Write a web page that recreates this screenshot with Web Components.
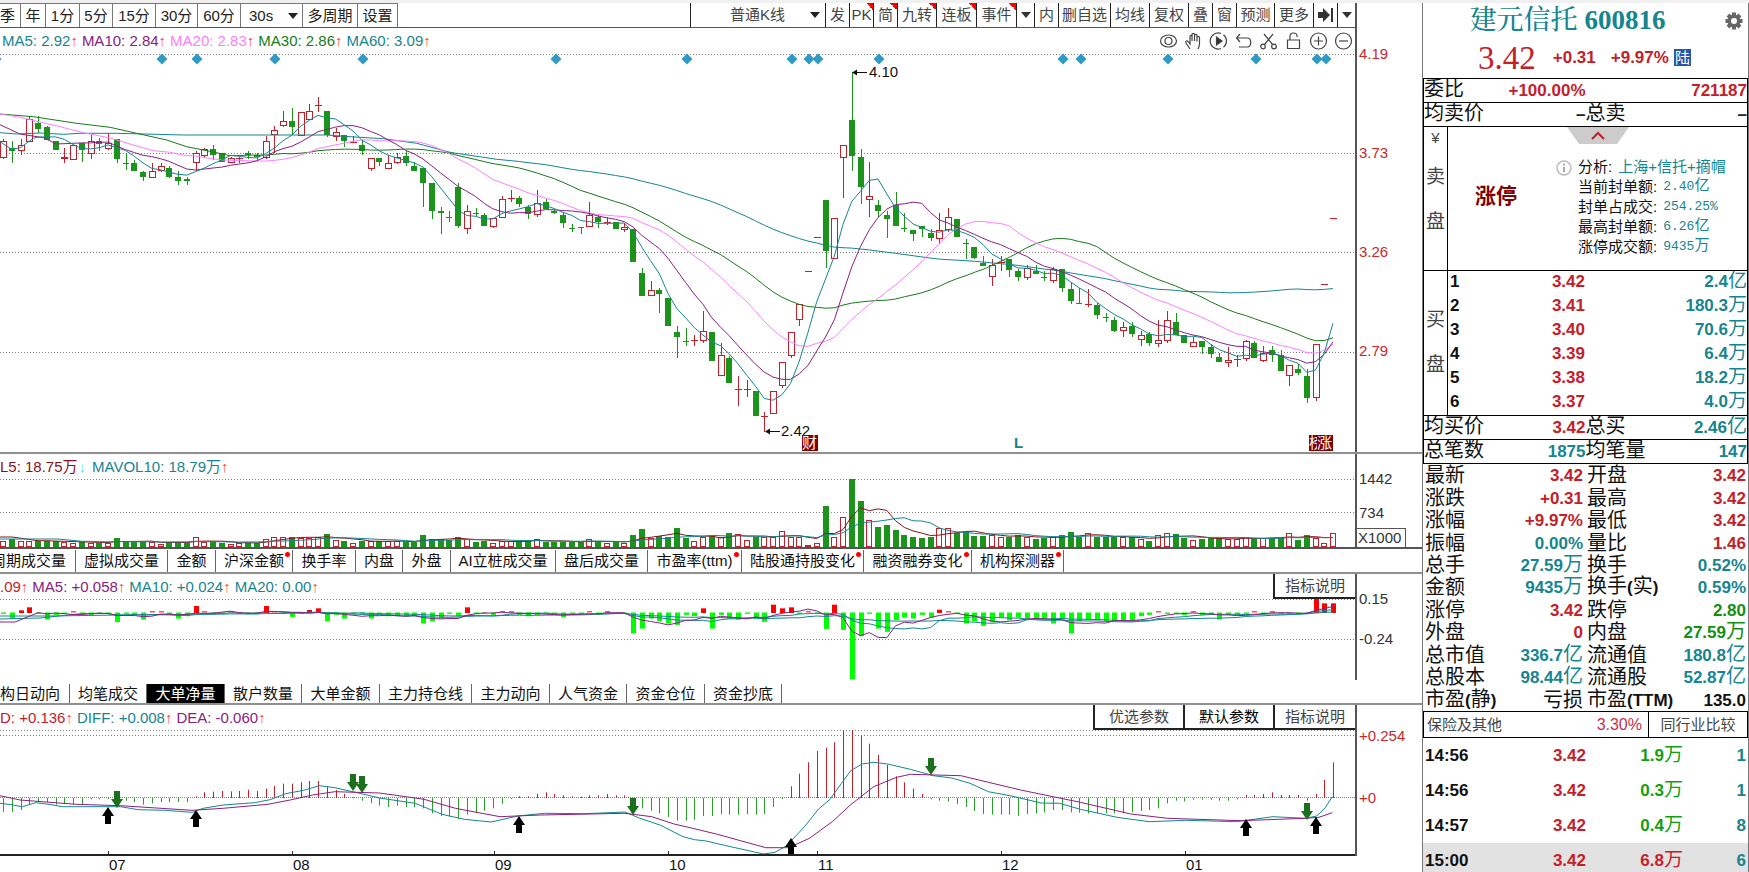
<!DOCTYPE html>
<html lang="zh-CN">
<head>
<meta charset="utf-8">
<title>建元信托 600816</title>
<style>
html,body{margin:0;height:100%}
body{font:15px/20px "Liberation Sans","Noto Sans CJK SC",sans-serif;color:#111;background:#fff;overflow:hidden}
</style>
</head>
<body>
<stock-app></stock-app>
<script>
const FONT = '"Liberation Sans","Noto Sans CJK SC",sans-serif';
const BASE = `*{box-sizing:border-box}button,select{font:15px/20px ${FONT};color:inherit;background:none;border:0;padding:0;margin:0;white-space:nowrap;border-radius:0}`;
class Base extends HTMLElement {
  connectedCallback() {
    if (this.shadowRoot) return;
    this.attachShadow({mode: 'open'}).innerHTML = `<style>${BASE}${this.css()}</style>${this.html()}`;
  }
  css() { return ''; }
  html() { return '<slot></slot>'; }
}
const X = i => Math.round(3 + 8.75 * i);
const RED = '#c4202a', GREEN = '#1c941c', TEAL = '#158590', PURPLE = '#8a2080', PINK = '#ff80ff', DKGREEN = '#1a7a1a', MAROON = '#8b1018';

/* Daily candles: colour, high, body top, body bottom, low (thirds of a pixel from the page top) */
const K = `r418,424,470,478 g424,443,452,488 r418,436,451,465 r347,358,424,424 g347,370,387,398 g378,382,421,421 g424,424,451,451 r443,472,476,488 r436,436,478,478 g430,430,451,486
r404,424,458,478 g415,424,432,452 r400,430,443,451 g417,417,478,488 g460,490,493,510 g480,490,512,512 g513,517,530,542 r490,513,530,535 r490,499,511,515 g497,505,530,535
g513,532,542,556 g532,538,543,556 r453,460,487,512 r445,447,466,475 g435,447,464,480 g460,460,486,486 r470,474,486,490 r470,474,478,490 g453,460,464,478 g460,464,470,480
r407,424,470,478 r378,390,402,458 r333,364,376,380 g325,364,380,405 r337,337,404,404 r313,334,357,360 r292,314,317,335 g333,333,404,412 r385,396,407,424 g405,405,424,440
r408,427,430,430 g420,434,452,466 r473,473,503,512 g473,473,486,497 r466,488,503,503 r458,470,487,492 g453,468,488,497 g487,497,512,512 g503,503,549,620 g550,550,632,658
g622,632,638,703 g632,650,653,665 g550,562,677,684 r614,633,683,703 g625,640,643,648 g640,645,677,677 r653,653,677,684 r588,597,650,650 r570,594,597,605 g588,595,612,620
g615,622,643,658 r570,608,642,650 g598,606,628,628 g628,632,638,642 g637,645,669,685 g672,685,688,695 g680,680,684,703 r607,645,677,677 g645,650,665,684 r652,667,670,676
g667,667,688,688 r668,680,688,695 g687,687,785,785 g805,820,887,887 r843,871,886,886 g865,870,882,940 g895,895,977,977 g978,997,1010,1074 g985,1023,1026,1038 r1005,1019,1022,1037
r932,994,1021,1029 g997,997,1082,1082 r1030,1065,1126,1126 g1068,1075,1149,1149 r1128,1167,1171,1217 r1140,1167,1171,1190 g1174,1174,1247,1247 r1236,1248,1251,1295 r1174,1174,1238,1238 r1087,1087,1156,1163
r997,997,1066,1074 r912,912,958,977 r814,814,814,814 r712,712,712,712 g600,600,752,805 r653,653,773,777 r435,435,470,595 g217,360,467,512 g446,472,562,613 r487,589,598,650
g600,615,632,652 g634,645,658,715 g577,616,677,677 g640,685,688,697 g690,690,703,722 g678,678,688,710 g687,699,713,723 r640,691,713,732 r625,652,688,696 g658,658,712,712
g716,730,733,776 g742,742,773,778 g767,790,797,797 r777,795,829,857 r768,785,789,812 g777,777,811,832 g807,814,830,842 r795,804,830,840 g795,814,823,823 g813,832,835,842
r800,806,841,850 g806,806,863,875 g850,868,902,912 g865,910,913,913 r868,911,914,922 g908,915,946,958 g940,952,955,966 g952,959,992,996 r966,980,991,1010 g966,978,1001,1010
r992,1006,1017,1037 g996,1003,1029,1037 r960,1021,1030,1041 r933,961,1021,1029 g940,967,1006,1006 g1004,1004,1030,1030 r1010,1025,1037,1041 g1023,1023,1041,1063 g1033,1041,1063,1074 g1060,1070,1086,1086
r1041,1079,1086,1102 r1066,1076,1080,1102 r1019,1024,1074,1082 g1023,1030,1074,1074 r1038,1058,1081,1086 g1038,1050,1065,1086 g1050,1064,1112,1112 r1096,1096,1126,1157 g1092,1106,1118,1126 g1107,1128,1194,1208
r1032,1032,1190,1202 r852,852,852,852 r653,653,653,653`.split(/\s+/).map(s => [s[0], ...s.slice(1).split(',').map(n => n / 3)]);
const CLOSE = K.map(k => k[0] === 'r' ? k[2] : k[3]);

/* Volume bar tops */
const V = `304 298 303 303 303 303 304 306 308 306 308 308 308 293 306 306 306 306 312 306 306 308 290 306 306 308 312 308 308 308
297 290 290 290 295 295 290 282 300 304 308 302 302 304 304 304 306 306 285 297 297 300 292 297 306 303 308 303 304 304 300 297 305 306
306 306 306 297 306 308 306 310 285 266 293 288 290 263 295 303 292 288 292 278 282 300 290 290 292 274 290 290 314 310 198 290 232 116 183 240
262 255 270 284 292 295 292 263 263 278 276 288 288 285 292 290 284 290 298 295 292 285 277 290 280 290 292 292 292 292 296 302 286 278 282 293
300 298 295 293 298 298 290 295 293 293 295 278 300 285 293 308 278`.split(/\s+/).map(n => 440 + n / 3);

/* Net large orders: end of each bar, zero at 517 */
const N = `521 535 511 502 521 538 524 521 514 521 524 521 521 546 521 524 538 514 514 524 535 528 498 514 521 521 514 521 521 521
498 514 521 530 521 510 505 543 524 535 521 521 535 524 528 528 528 528 550 543 535 521 528 502 521 521 524 514 514 524 528 524 521 521
531 521 521 514 521 514 521 521 580 565 535 543 550 554 524 528 505 565 524 535 538 521 535 545 494 505 502 521 514 521 566 494 569 717 588 521
565 575 540 532 535 524 532 509 514 521 550 543 557 546 532 540 532 535 538 535 550 538 580 543 540 540 543 543 543 540 528 524 514 521 521 524
514 524 524 538 524 524 521 514 521 514 521 521 521 521 474 490 490`.split(/\s+/).map(n => 440 + n / 3);

/* MACD histogram: end of each bar, zero at 354 */
const M = `396 396 390 374 366 366 374 372 374 372 358 358 357 372 362 366 374 370 366 366 366 366 349 337 335 333 334 333 329 333
326 318 311 311 307 303 303 320 330 342 352 362 370 377 381 377 381 381 385 400 408 410 416 404 400 392 385 371 357 349 349 341 337 342 346 349 350 346 346 342
346 346 365 385 392 400 411 422 422 419 408 408 402 404 404 402 404 402 381 357 319 281 247 213 203 187 153 150 165 191
225 255 289 307 326 342 358 362 365 372 381 393 402 404 404 404 407 402 400 397 390 390 397 398 400 400 400 400 400 397 393 390 385 370 362 364 359 359 359 362
362 358 345 345 342 337 345 345 345 362 342 300 247`.split(/\s+/).map(n => 680 + n / 3);

const pl = (pts, c) => `<polyline points="${pts.map(p => p[0].toFixed(1) + ',' + p[1].toFixed(1)).join(' ')}" fill="none" stroke="${c}"/>`;
const scale = (s, ox, kx, oy) => s.split(' ').map(p => { const [a, b] = p.split(','); return [ox + a / kx, oy + b / 3]; });
const avg = (d, n, c, lead = []) => {
  const pts = [...lead];
  for (let i = n - 1; i < d.length; i++) {
    let t = 0;
    for (let j = 0; j < n; j++) t += d[i - j];
    pts.push([3 + 8.75 * i, t / n]);
  }
  return pl(pts, c);
};
const dots = (y, d = '1 2') => `<path d="M0 ${y + .5}H1355" stroke="#808080" stroke-dasharray="${d}"/>`;
const box = (x, y, w, h, c) => `<rect x="${x}" y="${y}" width="${w}" height="${Math.max(1, h)}" fill="${c}"/>`;
const hollow = (x, y, w, h, c) => `<rect x="${x + .5}" y="${y + .5}" width="${w - 1}" height="${Math.max(1, h - 1)}" fill="#fff" stroke="${c}"/>`;

function priceArt() {
  let s = [54, 153, 252, 352].map(y => dots(y)).join('');
  for (const x of [-4, 162, 197, 275, 363, 556, 687, 792, 809, 818, 879, 1063, 1081, 1168, 1256, 1317, 1326])
    s += `<path d="M${x - 5.5} 59L${x} 53.5L${x + 5.5} 59L${x} 64.500z" fill="#2e9bc6"/>`;
  K.forEach(([c, h, t, b, l], i) => {
    const x = X(i), col = c === 'r' ? RED : GREEN, ty = Math.round(t), by = Math.round(b);
    if (l - h > .5) s += box(x, Math.round(h), 1, Math.round(l) - Math.round(h), col);
    if (c === 'r' && b - t > 1.8) s += hollow(x - 3, ty, 7, by - ty + 1, col);
    else s += box(x - 3, ty, c === 'r' ? 7 : 6, by - ty, col);
  });
  s += avg(CLOSE, 60, TEAL, scale('0,398 50,402 120,399 190,403 240,400 350,400 550,405 980,405 1050,410 1150,416 1250,430 1350,457 1490,478 1620,493', 0, 3, 0).filter(p => p[0] < 518));
  s += avg(CLOSE, 30, DKGREEN, scale('0,342 100,350 230,370 330,382 410,400 500,420 560,440 640,456 690,467', 0, 3, 0));
  s += avg(CLOSE, 20, PINK, scale('0,342 60,352 120,366 180,380 250,398 330,414 390,432 460,452', 0, 3, 0));
  s += avg(CLOSE, 10, PURPLE, scale('0,374 60,402 130,413 170,432', 0, 3, 0));
  s += avg(CLOSE, 5, TEAL, scale('0,425 35,448 61,443 100,415', 0, 3, 0));
  s += `<path d="M854 72.500H867M767 431.500H780" stroke="#111"/><path d="M852 72.500l5-3v6zM765 431.500l5-3v6z" fill="#111"/>`;
  return s;
}
function volumeArt() {
  let s = dots(479) + dots(512);
  V.forEach((t, i) => { const y = Math.round(t); s += K[i][0] === 'r' ? hollow(X(i) - 3, y, 6, 547 - y, RED) : box(X(i) - 3, y, 6, 547 - y, GREEN); });
  return s + avg(V, 5, MAROON, [[0, 537], [12, 537]]) + avg(V, 10, TEAL, [[0, 539], [58, 539]]);
}
function netArt() {
  let s = [599, 639, 680].map(y => dots(y)).join('');
  N.forEach((y, i) => {
    const up = y < 612.3;
    s += up ? box(X(i) - 2, y, 5, 613 - y - (y > 611 ? 1 : 0), '#f00') : box(X(i) - 2, 612.5, 5, y - 612.3, '#0f0');
  });
  return s + avg(N, 20, TEAL, [[0, 616], [50, 616]]) + avg(N, 10, TEAL, [[0, 619], [40, 618]]) + avg(N, 5, PURPLE, [[0, 622], [15, 622]]);
}
function macdArt() {
  let s = dots(730) + dots(735) + dots(797, '1 1');
  M.forEach((y, i) => { const up = y < 798; s += up ? box(X(i), y, 1, 798 - y, RED) : box(X(i), 798, 1, y - 798, '#28a028'); });
  s += pl([...scale('0,370 25,374 50,380 80,368 110,373 140,380 270,380 310,389 370,391 430,397 455,385 500,375 570,368 605,359 640,341 680,331 715,317 750,323 800,338 850,354 930,370 990,403 1040,418 1100,426 1160,408 1220,400 1310,401 1400,396 1430,413 1480,436 1530,470', 0, 2.24, 680), ...scale('10,479 35,483 75,496 160,522 185,517 210,498 250,439 280,387 305,358 330,310 350,272 375,252 400,247 430,252 480,268 530,287 570,294 610,310 650,335 700,348 765,369 805,370 850,388 930,412 1000,425 1080,421 1190,425 1270,410 1340,415 1365,408 1383,384 1399,350', 690, 2.178, 680)], TEAL);
  s += pl([...scale('0,347 45,360 170,373 270,377 430,391 500,385 600,373 650,360 700,345 750,335 850,339 950,358 1020,385 1120,410 1210,405 1400,400 1460,410 1510,432', 0, 2.24, 680), ...scale('0,443 60,463 165,503 215,503 260,475 310,425 350,374 400,320 450,292 480,283 590,287 650,307 720,330 850,367 960,402 1040,415 1200,422 1340,415 1370,412 1399,398', 690, 2.178, 680)], PURPLE);
  for (const [x, y] of [[117, 808], [353, 791], [362, 793], [633, 815], [931, 775], [1307, 820]])
    s += `<path d="M${x - 3} ${y - 17}h6v8h3l-6 9l-6-9h3z" fill="#1b701b"/>`;
  for (const [x, y] of [[108, 807], [196, 810], [519, 816], [791, 838], [1246, 819], [1316, 817]])
    s += `<path d="M${x - 3} ${y + 17}h6v-8h3l-6-9l-6 9h3z" fill="#000"/>`;
  for (const x of [108, 292, 494, 668, 817, 1001, 1185]) s += box(x, 851, 1, 5, '#333');
  return s;
}
const ART = {price: priceArt, volume: volumeArt, net: netArt, macd: macdArt};

customElements.define('plot-art', class extends Base {
  css() { return ':host{display:block;min-width:0}svg{display:block;width:100%;height:100%}'; }
  html() {
    const [y, h] = this.getAttribute('range').split(' ');
    return `<svg viewBox="0 ${y} 1355 ${h}" preserveAspectRatio="none" aria-hidden="true">${ART[this.getAttribute('kind')]()}</svg>`;
  }
});

customElements.define('chart-panel', class extends Base {
  css() {
    return `:host{display:grid;grid-template-columns:minmax(0,1fr) 65px;border-bottom:2px solid var(--rule,#909090);overflow:hidden}
    .plot{display:grid;grid-template:minmax(0,1fr)/minmax(0,1fr);border-right:2px solid #555;position:relative}
    .plot>*{grid-area:1/1}
    plot-art,::slotted(plot-art){grid-area:1/1;height:100%}
    .top{display:flex;justify-content:space-between;align-items:flex-start;min-width:0}`;
  }
  html() { return `<div class="plot"><slot></slot><div class="top"><slot name="legend"></slot><slot name="tools"></slot></div><slot name="marks"></slot></div><slot name="axis"></slot>`; }
});

customElements.define('indicator-legend', class extends Base {
  css() { return ':host{display:flex;line-height:25px;white-space:pre;color:#158590}i{font-style:normal;color:#ff4d40;margin-right:4px}i.d{color:#55e8f8;margin:0 6px 0 1px}'; }
  html() {
    return this.getAttribute('items').split('|').map(s => {
      const [t, c] = s.split('~');
      const a = t.slice(-1);
      return `<span style="color:${c}">${t.slice(0, -1)}</span><i class="${a === '↓' ? 'd' : ''}">${a}</i>`;
    }).join('');
  }
});

customElements.define('axis-scale', class extends Base {
  css() {
    return `:host{display:flex;flex-direction:column;padding-left:2px;line-height:20px;color:#333;overflow:hidden;white-space:nowrap}
    :host([kind=price]){padding-top:16px;gap:79px;color:#c8282c}:host([kind=volume]){padding-top:15px;gap:14px}
    :host([kind=net]){padding-top:15px;gap:20px}:host([kind=macd]){padding-top:21px;gap:42px;color:#c8282c}
    .unit{margin:-9px 16px 0 -2px;border:1px solid #555;border-width:1px 1px 0 0;line-height:18px;padding-left:1px}`;
  }
  html() { return this.getAttribute('values').split(' ').map(v => `<span class="${v[0] === 'X' ? 'unit' : ''}">${v}</span>`).join(''); }
});

customElements.define('tab-strip', class extends Base {
  css() {
    return `:host{display:flex;border-bottom:2px solid #909090;padding-top:1px}
    button{flex:none;display:flex;justify-content:center;align-items:center;border-right:1px solid #666;color:#111;position:relative;overflow:hidden;line-height:20px}
    button:first-of-type{justify-content:flex-end;padding-right:9px}
    button.on{background:#000;color:#fff}
    i{position:absolute;right:2px;top:2px;width:5px;height:5px;border-radius:3px;background:#f00}`;
  }
  html() {
    return this.getAttribute('tabs').split('|').map(s => {
      const [t, w, f] = s.split('~');
      return `<button type="button" class="${f === 'on' ? 'on' : ''}" style="width:${w}px">${t}${f === 'dot' ? '<i></i>' : ''}</button>`;
    }).join('');
  }
});

customElements.define('pick-list', class extends Base {
  css() {
    return `:host{display:block;position:relative}select{appearance:none;width:100%;height:100%;padding-left:var(--indent,8px)}
    svg{position:absolute;right:var(--caret,5px);top:9px;width:10px;height:6px;pointer-events:none}`;
  }
  html() { return `<select aria-label="${this.getAttribute('label')}"><option>${this.getAttribute('value')}</option></select><svg viewBox="0 0 10 6"><path d="M0 0h10L5 6z" fill="#222"/></svg>`; }
});

customElements.define('tool-bar', class extends Base {
  css() {
    return `:host{display:flex;justify-content:space-between;border-bottom:1px solid #555;border-right:2px solid #555;margin-right:65px}
    div{display:flex}.l>*{border-right:1px solid #777;border-top:1px solid #777;color:#222}.l .s{border-right:0}.l .m{border-left:1px solid #777}
    .r>*{border-left:1px solid #222;color:#444;position:relative}
    button{display:flex;align-items:center;justify-content:center;overflow:hidden;flex:none}
    .first{justify-content:flex-end;padding-right:5px}
    .hot::after{content:"";position:absolute;right:0;top:0;width:7px;height:7px;background:linear-gradient(45deg,transparent 50%,#f00 50%)}`;
  }
  html() {
    const b = (t, w, c = '') => `<button type="button" class="${c}" style="width:${w}px">${t}</button>`;
    const caret = '<svg width="10" height="6" viewBox="0 0 10 6"><path d="M0 0h10L5 6z" fill="#333"/></svg>';
    return `<div class="l">${b('季', 21, 'first')}${b('年', 25)}${b('1分', 34)}${b('5分', 33)}${b('15分', 43)}${b('30分', 42)}${b('60分', 43)}
    <pick-list class="s" label="秒周期" value="30s" style="width:61px;--caret:4px"></pick-list>${b('多周期', 56, 'm')}${b('设置', 40)}</div>
    <div class="r"><pick-list label="K线类型" value="普通K线" style="width:135px;--indent:39px"></pick-list>${b('发', 24)}${b('PK', 24, 'hot')}${b('简', 24, 'hot')}${b('九转', 39, 'hot')}${b('连板', 40, 'hot')}${b('事件', 40, 'hot')}${b(caret, 18)}${b('内', 24)}${b('删自选', 52)}${b('均线', 39)}${b('复权', 39)}${b('叠', 24)}${b('窗', 24)}${b('预测', 38)}${b('更多', 39)}${b('<svg width="16" height="14" viewBox="0 0 16 14"><path d="M0 4h5V0l7 7l-7 7V10H0z" fill="#333"/><path d="M14 0v14" stroke="#333" stroke-width="2"/></svg>', 24)}${b(caret, 18)}</div>`;
  }
});

customElements.define('draw-tools', class extends Base {
  css() { return ':host{display:flex;gap:8px;padding:4px 3px 0 0}button{width:17px;height:18px}svg{display:block;width:17px;height:18px;fill:none;stroke:#444;stroke-width:1.2;overflow:visible}'; }
  html() {
    const I = {
      显示: '<ellipse cx="8.500" cy="9" rx="8" ry="6"/><circle cx="8.500" cy="9" r="3.500"/>',
      拖动: '<path d="M5 17L1 11C0 9 2 8 3.500 10L5 12V4.500C5 3 7 3 7 4.500V9V2.500C7 1 9.500 1 9.500 2.500V9V3.500C9.500 2 12 2 12 3.500V9.500V5.500C12 4 14.500 4 14.500 5.500V12C14.500 15 13.500 16 13 17"/>',
      播放: '<path d="M11 1.500A8 8 0 1 0 11 16.500M13.500 2.800A8 8 0 0 1 13.500 15.200"/><path d="M6.500 5L12 9L6.500 13z" fill="#333"/>',
      撤销: '<path d="M5 2L1.500 6L5 10M1.500 6H12C17 6 17 15 12 15H4"/>',
      剪切: '<circle cx="3" cy="14.500" r="2.300"/><circle cx="14" cy="14.500" r="2.300"/><path d="M4.500 12.500L13 2M12.500 12.500L4 2"/>',
      锁定: '<path d="M2.500 8H14.500V16.500H2.500zM5 8V4C5 0 12 0 12 4V5"/>',
      放大: '<circle cx="8.500" cy="9" r="8"/><path d="M4 9H13M8.500 4.500V13.500"/>',
      缩小: '<circle cx="8.500" cy="9" r="8"/><path d="M4 9H13"/>'
    };
    return Object.entries(I).map(([k, v]) => `<button type="button" aria-label="${k}"><svg viewBox="0 0 17 18">${v}</svg></button>`).join('');
  }
});

customElements.define('param-buttons', class extends Base {
  css() { return ':host{display:flex}button{height:25px;width:90px;border:1px solid #222;border-width:0 0 2px 2px;background:#fff;color:#444}button:last-child{width:82px}.on{color:#000}'; }
  html() { return this.getAttribute('names').split(' ').map(n => `<button type="button" class="${n === '默认参数' ? 'on' : ''}">${n}</button>`).join(''); }
});

/* Annotations pinned on the price canvas, placed in shares of its width */
customElements.define('price-marks', class extends Base {
  css() {
    return `:host{display:block;position:relative;pointer-events:none}
    span{position:absolute;line-height:20px;color:#111}.b{background:#800000;color:#fff;width:16px;height:16px;line-height:16px}.c{color:#158590;font-weight:bold}`;
  }
  html() {
    const m = (t, x, y, c = '') => `<span class="${c}" style="left:${(x / 13.55).toFixed(2)}%;top:${y}px">${t}</span>`;
    return m('4.10', 869, 34) + m('2.42', 781, 393) + m('财', 802, 407, 'b') + m('L', 1014, 405, 'c') + m('榜', 1309, 407, 'b') + m('涨', 1317, 407, 'b');
  }
});

customElements.define('month-row', class extends Base {
  css() { return ':host{display:grid;grid-template-columns:108fr 184fr 202fr 174fr 149fr 184fr 184fr 170fr;margin-right:67px;height:16px;line-height:17px}span{padding-left:1px}'; }
  html() { return ['', '07', '08', '09', '10', '11', '12', '01'].map(m => `<span>${m}</span>`).join(''); }
});

const mix = s => s.replace(/[\u4e00-\u9fff]+|[^\u4e00-\u9fff]+/g, t => /[\u4e00-\u9fff]/.test(t) ? t : `<b>${t}</b>`);
const cell = (v, c, tag = 'td') => `<${tag} class="${c}">${mix(v)}</${tag}>`;

customElements.define('quote-head', class extends Base {
  css() {
    return `:host{display:block;height:75px;position:relative;text-align:center}
    h1{margin:0;font:bold 27px/34px "Liberation Serif","Noto Serif CJK SC","Noto Sans CJK SC",serif;color:#158590;padding-right:36px;white-space:nowrap}
    h1 span{font-weight:500}
    p{margin:0;padding-left:55px;height:41px;display:flex;align-items:center;color:#c4202a;font:bold 17px/20px ${FONT}}
    strong{font:33px/40px "Liberation Serif",serif}.a{margin-left:17px}.p{margin-left:15px}
    em{font:15px/17px ${FONT};background:#2a54a4;color:#fff;width:17px;height:17px;margin-left:5px}
    button{position:absolute;right:5px;top:9px;width:18px;height:18px}svg{display:block}`;
  }
  html() {
    return `<h1><span>建元信托</span> 600816</h1><p><strong>3.42</strong><span class="a">+0.31</span><span class="p">+9.97%</span><em>陆</em></p>
    <button type="button" aria-label="设置"><svg width="18" height="18" viewBox="-9 -9 18 18"><g fill="#666">${[0, 45, 90, 135].map(a => `<rect x="-2" y="-8.500" width="4" height="17" transform="rotate(${a})"/>`).join('')}<circle r="6.500"/></g><circle r="3" fill="#fff"/></svg></button>`;
  }
});

customElements.define('quote-pair', class extends Base {
  css() {
    return `:host{display:grid;grid-template-columns:1fr 1fr;height:24px;border-top:1px solid #000;font-size:20px;line-height:21px}
    :host([last]){height:25px;border-bottom:1px solid #000}
    div{display:flex;justify-content:space-between;align-items:flex-start;white-space:nowrap}b{font-size:17px}.v{color:#158590}.r{color:#c4202a}.k{color:#222}`;
  }
  html() {
    const a = this.getAttribute('data').split(' ');
    return [0, 3].map(i => `<div><span>${a[i]}</span><span class="${a[i + 2]}">${mix(a[i + 1])}</span></div>`).join('');
  }
});

customElements.define('seal-note', class extends Base {
  css() {
    return `:host{display:grid;grid-template-columns:24px 1fr;height:144px;border-top:1px solid #000}
    .side{border-right:1px solid #000;color:#444;font-size:19px;display:flex;flex-direction:column;align-items:center;line-height:22px}
    .side span:first-child{font-size:15px;margin-bottom:17px}.side span+span+span{margin-top:23px}
    .main{display:grid;grid-template:30px 1fr/90px 1fr}
    .fold{grid-column:1/3;justify-self:center;width:62px;height:17px}
    .fold svg{display:block}
    strong{color:#800000;font-size:21px;line-height:30px;margin:24px 0 0 27px}
    dl{margin:0;display:grid;grid-template-columns:max-content 1fr;grid-auto-rows:20px;white-space:nowrap;padding-left:40px;position:relative}
    .f{grid-column:1/3;display:flex}
    dt{color:#111}dd{margin:0 0 0 6px;color:#158590}.m{font-family:"Liberation Mono","Noto Sans CJK SC",monospace;font-size:13px}.m span{font-size:15px}
    .i{position:absolute;left:18px;top:3px}`;
  }
  html() {
    const rows = [['当前封单额:', '2.40亿'], ['封单占成交:', '254.25%'], ['最高封单额:', '6.26亿'], ['涨停成交额:', '9435万']];
    return `<div class="side"><span>¥</span><span>卖</span><span>盘</span></div><div class="main">
    <button class="fold" type="button" aria-label="收起"><svg width="62" height="17"><path d="M0 0H62L50 17H12z" fill="#ccc"/><path d="M25 12l6-6l6 6" fill="none" stroke="#c4202a" stroke-width="2"/></svg></button>
    <strong>涨停</strong><dl>
    <div class="f"><dt>分析:</dt><dd>上海+信托+摘帽</dd></div>${rows.map(r => `<dt>${r[0]}</dt><dd class="m">${r[1].replace(/[亿万]/, '<span>$&</span>')}</dd>`).join('')}<svg class="i" width="16" height="16" viewBox="0 0 16 16" aria-hidden="true"><circle cx="8" cy="8" r="7" fill="none" stroke="#bbb" stroke-width="1.500"/><path d="M8 3.500v2M8 7v5" stroke="#aaa" stroke-width="2"/></svg></dl></div>`;
  }
});

customElements.define('bid-book', class extends Base {
  css() {
    return `:host{display:grid;grid-template-columns:24px 1fr;height:145px;border-top:1px solid #000}
    .side{border-right:1px solid #000;color:#444;font-size:19px;line-height:22px;display:flex;flex-direction:column;align-items:center;gap:23px;padding-top:38px}
    table{border-collapse:collapse;table-layout:fixed;width:100%;font-size:19px;line-height:20px}
    tr{height:24px}td,th{padding:0;text-align:right;font-weight:400;vertical-align:top}th{width:30px;text-align:left;padding-left:2px}td:nth-child(2){width:107px}b{font-size:17px}.r{color:#c4202a}.v{color:#158590}`;
  }
  html() {
    const d = [['3.42', '2.4亿'], ['3.41', '180.3万'], ['3.40', '70.6万'], ['3.39', '6.4万'], ['3.38', '18.2万'], ['3.37', '4.0万']];
    return `<div class="side"><span>买</span><span>盘</span></div><table>${d.map((r, i) => `<tr>${cell(String(i + 1), '', 'th')}${cell(r[0], 'r')}${cell(r[1], 'v')}</tr>`).join('')}</table>`;
  }
});

customElements.define('stat-table', class extends Base {
  css() {
    return `:host{display:block;height:247px;padding:0 2px}table{border-collapse:collapse;width:100%;height:100%;table-layout:fixed;font-size:20px;line-height:20px;white-space:nowrap}
    th{font-weight:400;text-align:left;padding:0}td{text-align:right;padding:0}th:first-child{width:70px}td:nth-child(2){width:88px}th:nth-child(3){padding-left:4px;width:88px}
    b{font-size:17px}.r{color:#c4202a}.v{color:#158590}.g{color:#129012}.k{color:#111}`;
  }
  html() {
    return `最新 3.42 r 开盘 3.42 r|涨跌 +0.31 r 最高 3.42 r|涨幅 +9.97% r 最低 3.42 r|振幅 0.00% v 量比 1.46 r|总手 27.59万 v 换手 0.52% v|金额 9435万 v 换手(实) 0.59% v|涨停 3.42 r 跌停 2.80 g|外盘 0 r 内盘 27.59万 g|总市值 336.7亿 v 流通值 180.8亿 v|总股本 98.44亿 v 流通股 52.87亿 v|市盈(静) 亏损 k 市盈(TTM) 135.0 k`
      .split('|').map(r => r.split(' ')).reduce((s, a) => s + `<tr>${cell(a[0], '', 'th')}${cell(a[1], a[2])}${cell(a[3], '', 'th')}${cell(a[4], a[5])}</tr>`, '<table>') + '</table>';
  }
});

customElements.define('industry-row', class extends Base {
  css() {
    return `:host{display:grid;grid-template-columns:1fr 99px;height:27px;border:1px solid #000;color:#444}
    a{display:flex;justify-content:space-between;align-items:center;padding:0 6px 0 3px;color:inherit;text-decoration:none}em{font:16px/24px ${FONT};color:#c8304c}button{border-left:1px solid #000}`;
  }
  html() { return '<a href="#">保险及其他<em>3.30%</em></a><button type="button">同行业比较</button>'; }
});

customElements.define('tick-list', class extends Base {
  css() {
    return `:host{display:block;flex:1;min-height:0;overflow:hidden}table{border-collapse:collapse;width:100%;table-layout:fixed;font-size:19px;line-height:22px}
    tr{height:35px}tr:last-child{background:#e2e2e2}th,td{padding:0;text-align:right;font-weight:400}th{text-align:left;padding-left:2px;width:80px}td:nth-child(2){width:83px}td:nth-child(3){width:97px}
    td:last-child{padding-right:2px}b{font-size:17px}.r{color:#c4202a}.g{color:#129f12}.v{color:#158590}`;
  }
  html() {
    return '<table>' + [['14:56', '1.9万', 'g', '1'], ['14:56', '0.3万', 'g', '1'], ['14:57', '0.4万', 'g', '8'], ['15:00', '6.8万', 'r', '6']]
      .map(r => `<tr>${cell(r[0], '', 'th')}${cell('3.42', 'r')}${cell(r[1], r[2])}${cell(r[3], 'v')}</tr>`).join('') + '</table>';
  }
});

customElements.define('quote-panel', class extends Base {
  css() { return ':host{display:flex;flex-direction:column;border:1px solid #777;border-width:0 1px;min-height:0;overflow:hidden}.box{border:1px solid #000;border-width:0 1px}'; }
  html() {
    return `<quote-head></quote-head><div class="box">
    <quote-pair data="委比 +100.00% r  721187 r"></quote-pair><quote-pair data="均卖价 – k 总卖 – k"></quote-pair>
    <seal-note></seal-note><bid-book></bid-book>
    <quote-pair data="均买价 3.42 r 总买 2.46亿 v"></quote-pair><quote-pair last data="总笔数 1875 v 均笔量 147 v"></quote-pair></div>
    <stat-table></stat-table><industry-row></industry-row><tick-list></tick-list>`;
  }
});

customElements.define('stock-app', class extends Base {
  css() {
    return `:host{display:grid;grid-template-columns:minmax(0,1fr) 327px;grid-template-rows:minmax(0,1fr);height:100vh;border-top:3px solid #f0f0f0}
    main{display:grid;grid-template-rows:25px 426px 95px 25px 109px 22px 151px 16px;min-width:0;overflow:hidden;align-content:start}
    .vol{--rule:#555}.net{border-bottom:0}.net{padding-bottom:3px}.macd{border-bottom:0}
    .macd plot-art{border-bottom:2px solid #222}`;
  }
  html() {
    return `<main><tool-bar></tool-bar>
    <chart-panel><plot-art kind="price" range="28 424"></plot-art>
      <indicator-legend slot="legend" style="padding-left:2px" items="MA5: 2.92↑~#158590|MA10: 2.84↑~#8a2080|MA20: 2.83↑~#ff80ff|MA30: 2.86↑~#1a7a1a|MA60: 3.09↑~#158590"></indicator-legend>
      <draw-tools slot="tools"></draw-tools><price-marks slot="marks" style="grid-area:1/1"></price-marks>
      <axis-scale slot="axis" kind="price" values="4.19 3.73 3.26 2.79"></axis-scale></chart-panel>
    <chart-panel class="vol"><plot-art kind="volume" range="454 93"></plot-art>
      <indicator-legend slot="legend" items="L5: 18.75万↓~#8b1018|MAVOL10: 18.79万↑~#158590"></indicator-legend>
      <axis-scale slot="axis" kind="volume" values="1442 734 X1000"></axis-scale></chart-panel>
    <tab-strip tabs="周期成交量~76|虚拟成交量~92|金额~48|沪深金额~77~dot|换手率~63|内盘~47|外盘~48|AI立桩成交量~105|盘后成交量~92|市盈率(ttm)~94~dot|陆股通持股变化~122~dot|融资融券变化~108~dot|机构探测器~92~dot"></tab-strip>
    <chart-panel class="net"><plot-art kind="net" range="574 106"></plot-art>
      <indicator-legend slot="legend" items=".09↑~#c4202a|MA5: +0.058↑~#8a2080|MA10: +0.024↑~#158590|MA20: 0.00↑~#158590"></indicator-legend>
      <param-buttons slot="tools" names="指标说明"></param-buttons>
      <axis-scale slot="axis" kind="net" values="0.15 -0.24"></axis-scale></chart-panel>
    <tab-strip tabs="构日动向~70|均笔成交~77|大单净量~78~on|散户数量~77|大单金额~78|主力持仓线~92|主力动向~78|人气资金~77|资金仓位~78|资金抄底~77"></tab-strip>
    <chart-panel class="macd"><plot-art kind="macd" range="705 149"></plot-art>
      <indicator-legend slot="legend" items="D: +0.136↑~#c4202a|DIFF: +0.008↑~#158590|DEA: -0.060↑~#8a2080"></indicator-legend>
      <param-buttons slot="tools" names="优选参数 默认参数 指标说明"></param-buttons>
      <axis-scale slot="axis" kind="macd" values="+0.254 +0"></axis-scale></chart-panel>
    <month-row></month-row></main><quote-panel></quote-panel>`;
  }
});
</script>
</body>
</html>
